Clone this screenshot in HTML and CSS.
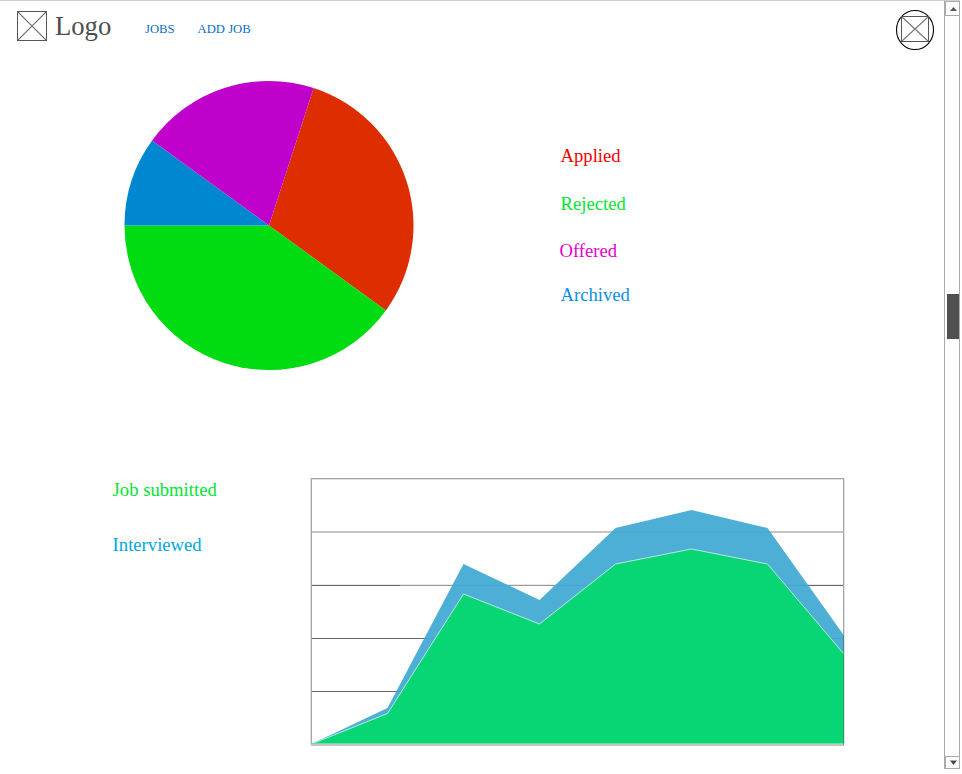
FILE: index.html
```html
<!DOCTYPE html>
<html lang="en">
<head>
<meta charset="utf-8">
<title>Jobs</title>
<link rel="stylesheet" href="styles.css">
</head>
<body>
<div class="window">
  <div class="page">
    <header class="header">
      <svg class="logo-mark" width="31" height="31" viewBox="0 0 31 31"><path d="M.5 .5L29.5 29.5M29.5 .5L.5 29.5" fill="none" stroke="#777" stroke-width="1.1"/><rect x=".5" y=".5" width="29" height="29" fill="none" stroke="#555"/></svg>
      <span class="logo-text">Logo</span>
      <nav class="nav"><a>JOBS</a><a>ADD JOB</a></nav>
      <svg class="avatar" width="40" height="42" viewBox="895 9 40 42"><ellipse cx="915" cy="30" rx="18.5" ry="19.5" fill="#fff" stroke="#000" stroke-width="1.1"/><path d="M902 17L928 41M928 17L902 41" stroke="#777" stroke-width="1.1"/><rect x="901.5" y="16.5" width="27" height="25" fill="none" stroke="#555"/></svg>
    </header>
    <main>
      <section class="status">
        <svg class="pie" width="290" height="290" viewBox="124 81 290 290">
          <path fill="#de2d00" d="M269 225.5L313.65 88.07A144.5 144.5 0 0 1 385.9 310.43Z"/>
          <path fill="#00db12" d="M269 225.5L385.9 310.43A144.5 144.5 0 0 1 124.5 225.5Z"/>
          <path fill="#0087d0" d="M269 225.5H124.5A144.5 144.5 0 0 1 152.1 140.57Z"/>
          <path fill="#c000cb" d="M269 225.5L152.1 140.57A144.5 144.5 0 0 1 313.65 88.07Z"/>
        </svg>
        <ul class="legend">
          <li class="applied">Applied</li>
          <li class="rejected">Rejected</li>
          <li class="offered">Offered</li>
          <li class="archived">Archived</li>
        </ul>
      </section>
      <section class="history">
        <ul class="series">
          <li class="submitted">Job submitted</li>
          <li class="interviewed">Interviewed</li>
        </ul>
        <svg class="chart" width="535" height="269" viewBox="310 478 535 269">
          <path d="M311 532H844" stroke="#c4c4c4" stroke-width="2"/>
          <path d="M311 584.5H844M311 691.5H430" stroke="#e8e8e8"/>
          <path d="M311 585.5H400M800 585.5H844M311 638.5H844M311 691.5H844" stroke="#666"/>
          <path d="M400 585.5H800" stroke="#999"/>
          <path d="M310.5 478V745M310 479.5H845M844.5 478V745" stroke="#e2e2e2"/>
          <path d="M311.5 478V745M311 478.5H844M843.5 478V745" stroke="#a6a6a6"/>
          <path d="M311 745H844" stroke="#c4c4c4" stroke-width="2"/>
          <path fill="#41a9d3" fill-opacity=".93" d="M311.5 744L387.5 708L463.5 564L539.5 600L615.5 528L691.5 510L767.5 528L844 635.5V744Z"/>
          <path fill="#07d673" fill-opacity=".985" d="M311.5 744L387.5 713.5L463.5 594L539.5 624L615.5 564L691.5 549L767.5 564L844 653.5V744Z"/>
          <path fill="none" stroke="#b7e9df" d="M311.5 744L387.5 713.5L463.5 594L539.5 624L615.5 564L691.5 549L767.5 564L843.5 653.5"/>
          <path d="M311 743.5H844" stroke="#6bdfa9"/>
          <path d="M843.5 635V745" stroke="#555" stroke-opacity=".45"/>
        </svg>
      </section>
    </main>
  </div>
  <div class="scrollbar">
    <div class="arrow"><svg width="7" height="4" viewBox="0 0 7 4"><path d="M0 4L3.5 0L7 4Z" fill="#555"/></svg></div>
    <div class="thumb"></div>
    <div class="arrow"><svg width="7" height="5" viewBox="0 0 7 5"><path d="M0 .5H7" stroke="#aaa"/><path d="M.5 1H6.5L3.5 5Z" fill="#444"/></svg></div>
  </div>
</div>
</body>
</html>
```
FILE: styles.css
```css
* { box-sizing: border-box; }
body {
  margin: 0;
  height: 774px;
  overflow: hidden;
  background: #fff;
  font-family: "Liberation Serif", "Times New Roman", serif;
}
ul { margin: 0; padding: 0; list-style: none; }
svg { display: block; flex: none; }
.window {
  display: flex;
  width: 960px;
  height: 769px;
  border-top: 1px solid #d0d0d0;
}
.page { width: 944px; }
.header {
  display: flex;
  align-items: flex-start;
  height: 59px;
  padding: 8px 9px 0 17px;
}
.logo-mark { margin-top: 2px; }
.logo-text {
  width: 89px;
  margin: 2px 0 0 7px;
  color: #4d4d4d;
  font-size: 26.67px;
  line-height: 30px;
}
.nav {
  display: flex;
  gap: 23px;
  margin: 12px auto 0 1px;
  color: #0b6fc4;
  font-size: 12.67px;
  line-height: 16px;
}
.status {
  display: flex;
  gap: 146.5px;
  height: 418px;
  padding: 21px 0 0 124px;
}
.legend, .series { font-size: 18.67px; line-height: 24px; }
.legend { padding-top: 63px; }
.legend li + li { margin-top: 24px; }
.legend .offered { margin-top: 23px; margin-left: -1px; }
.legend .archived { margin-top: 20px; }
.applied { color: #f60000; }
.rejected { color: #00e632; }
.offered { color: #e600c8; }
.archived { color: #0a90e8; }
.history { display: flex; padding-left: 112.6px; }
.series { width: 197.4px; }
.series li + li { margin-top: 31px; }
.submitted { color: #00e632; }
.interviewed { color: #00a8e0; }
.scrollbar {
  display: flex;
  flex-direction: column;
  width: 16px;
  border: 1px solid #aaa;
}
.arrow {
  display: flex;
  align-items: center;
  justify-content: center;
  width: 15px;
  height: 14px;
  border: 1px solid #aaa;
  border-width: 0 0 1px 1px;
}
.arrow:last-child {
  height: 12px;
  margin-top: auto;
  border-width: 1px 0 0 1px;
}
.thumb { width: 12px; height: 45px; margin: 278px 0 0 2px; background: #505050; }
```
